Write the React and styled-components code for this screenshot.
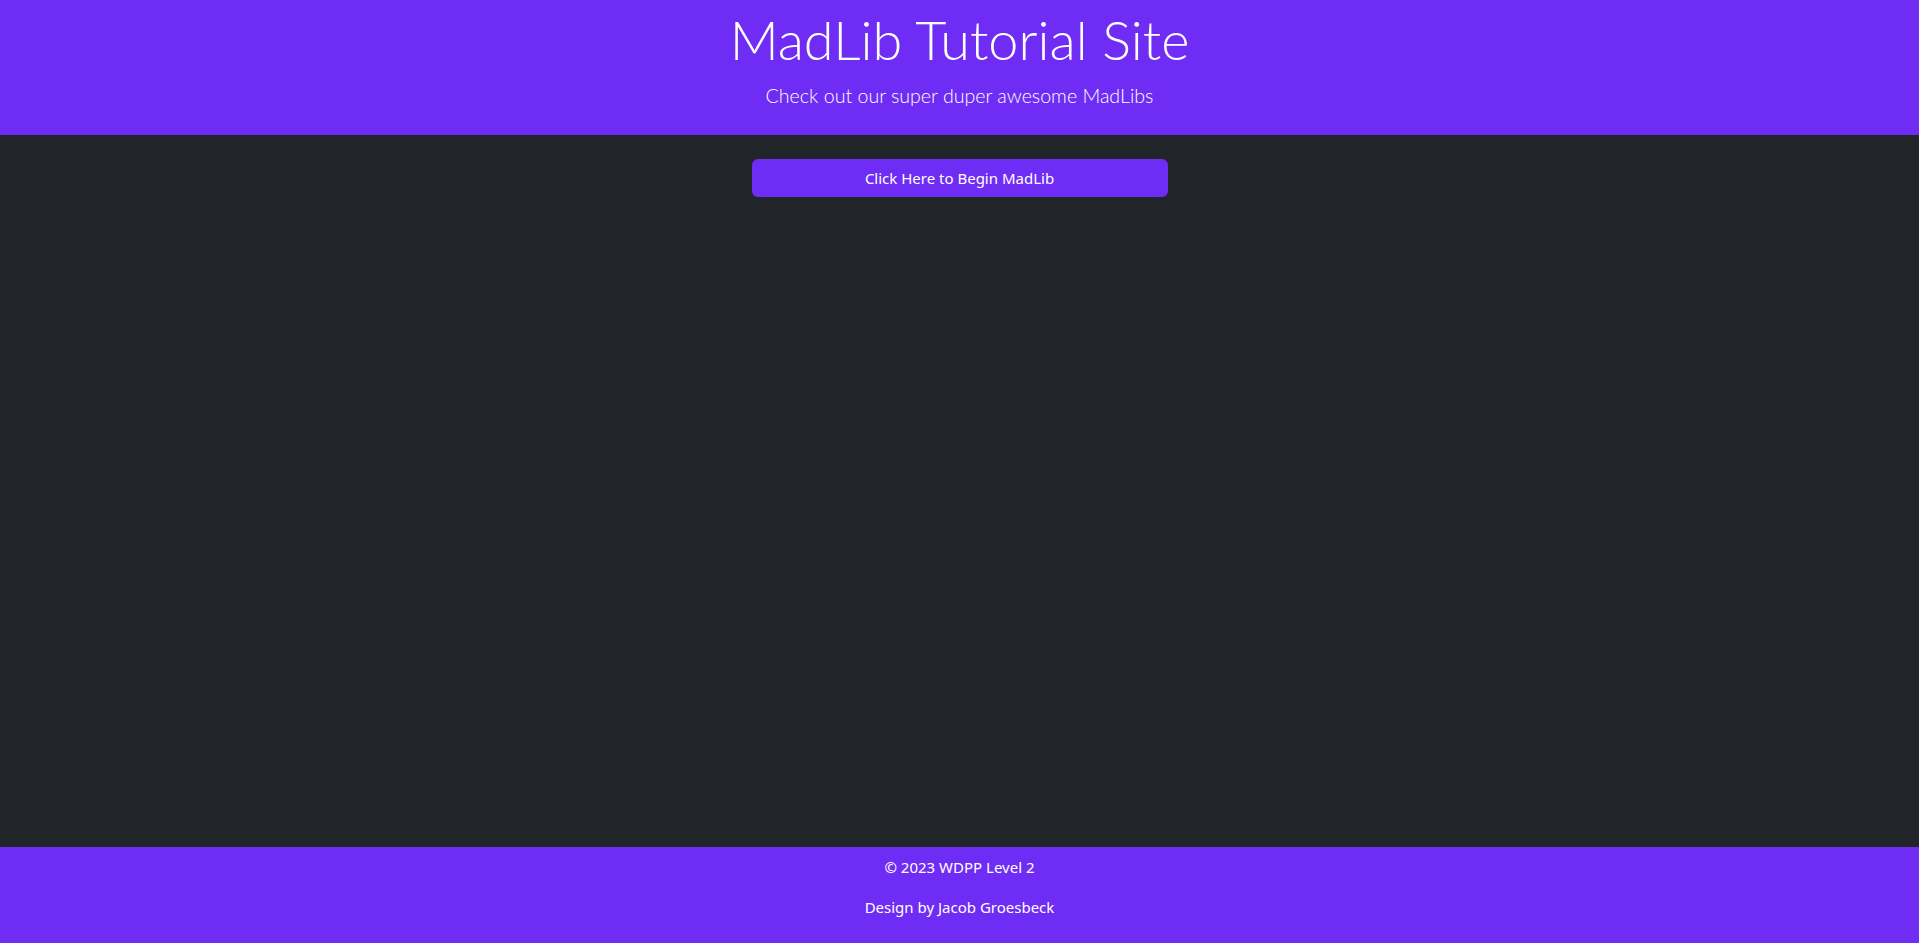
import React from 'react';
import styled, { createGlobalStyle } from 'styled-components';

const purple = '#6f2cf4';

const GlobalStyle = createGlobalStyle`
  html, body {
    margin: 0;
    padding: 0;
    height: 100%;
  }
  body {
    background: #212529;
    color: #fff;
    font-family: "Noto Sans", "Open Sans", sans-serif;
    font-size: 16px;
    line-height: 1.5;
  }
  #root {
    min-height: 100%;
  }
`;

const Page = styled.div`
  display: flex;
  flex-direction: column;
  min-height: 100vh;
`;

const Header = styled.header`
  background: ${purple};
  height: 135px;
  box-sizing: border-box;
  display: flex;
  flex-direction: column;
  align-items: center;
  padding-top: 8px;
`;

const Title = styled.h1`
  margin: 0;
  font-family: "Lato", "Noto Sans", sans-serif;
  font-weight: 300;
  font-size: 54px;
  line-height: 1.2;
`;

const Lead = styled.p`
  margin: 8px 0 0;
  font-family: "Lato", "Noto Sans", sans-serif;
  font-weight: 300;
  font-size: 19.6px;
  line-height: 1.5;
`;

const Main = styled.main`
  flex: 1;
  display: flex;
  justify-content: center;
  align-items: flex-start;
  padding-top: 24px;
`;

const BeginButton = styled.button`
  width: 416px;
  height: 38px;
  border: none;
  border-radius: 6px;
  background: ${purple};
  color: #fff;
  font-family: "Noto Sans", sans-serif;
  font-size: 15px;
  cursor: pointer;
`;

const Footer = styled.footer`
  background: ${purple};
  padding: 8px 0;
  text-align: center;
`;

const FooterLine = styled.p`
  margin: 0 0 16px;
  font-size: 15px;
  line-height: 24px;
`;

const App = () => {
  return (
    <Page>
      <GlobalStyle />
      <Header>
        <Title>MadLib Tutorial Site</Title>
        <Lead>Check out our super duper awesome MadLibs</Lead>
      </Header>
      <Main>
        <BeginButton>Click Here to Begin MadLib</BeginButton>
      </Main>
      <Footer>
        <FooterLine>© 2023 WDPP Level 2</FooterLine>
        <FooterLine>Design by Jacob Groesbeck</FooterLine>
      </Footer>
    </Page>
  );
};

export default App;
